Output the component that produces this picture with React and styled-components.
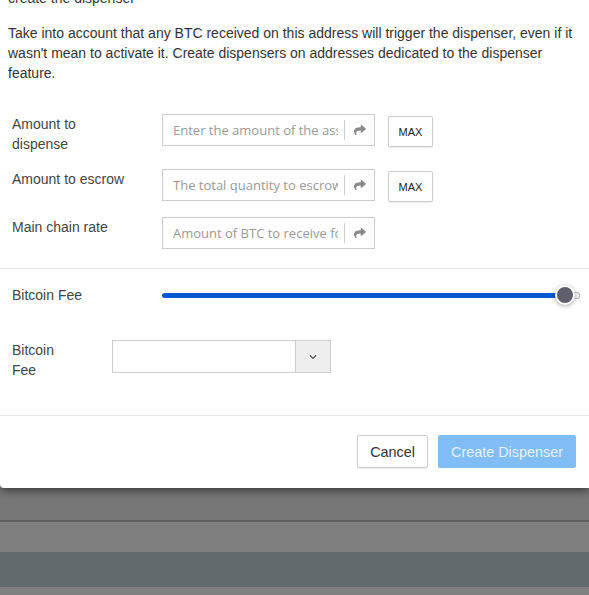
import React from "react";
import styled, { createGlobalStyle } from "styled-components";
import { FaShare, FaChevronDown } from "react-icons/fa";

const GlobalStyle = createGlobalStyle`
  html, body {
    margin: 0;
    padding: 0;
    background: #808080;
    overflow: hidden;
  }
  body {
    font-family: "Liberation Sans", Arial, sans-serif;
    color: #333;
  }
`;

const App = () => {
  return (
    <Page>
      <GlobalStyle />
      <Modal>
        <Body>
          <Intro>create the dispenser</Intro>
          <Note>
            Take into account that any BTC received on this address will trigger the dispenser, even if it
            wasn't mean to activate it. Create dispensers on addresses dedicated to the dispenser
            feature.
          </Note>

          <Fields>
            <Row>
              <Label>Amount to dispense</Label>
              <InputGroup>
                <Input placeholder="Enter the amount of the asset to dispense" />
                <Addon>
                  <FaShare />
                </Addon>
              </InputGroup>
              <MaxButton>MAX</MaxButton>
            </Row>
            <Row>
              <Label>Amount to escrow</Label>
              <InputGroup>
                <Input placeholder="The total quantity to escrow" />
                <Addon>
                  <FaShare />
                </Addon>
              </InputGroup>
              <MaxButton>MAX</MaxButton>
            </Row>
            <Row>
              <Label>Main chain rate</Label>
              <InputGroup>
                <Input placeholder="Amount of BTC to receive for each dispense" />
                <Addon>
                  <FaShare />
                </Addon>
              </InputGroup>
            </Row>
          </Fields>
        </Body>

        <Divider />

        <FeeSection>
          <SliderRow>
            <Label>Bitcoin Fee</Label>
            <Slider>
              <Track style={{ width: "96%" }} />
              <Thumb />
              <Rest />
            </Slider>
          </SliderRow>
          <SelectRow>
            <Label $width="100px">Bitcoin Fee</Label>
            <Select>
              <SelectValue />
              <SelectArrow>
                <FaChevronDown />
              </SelectArrow>
            </Select>
          </SelectRow>
        </FeeSection>

        <Divider />

        <Footer>
          <Button>Cancel</Button>
          <Button $primary>Create Dispenser</Button>
        </Footer>
      </Modal>

      <Backdrop>
        <Stripe $h="32px" $bg="#777777" />
        <Stripe $h="2px" $bg="#5f5f5f" />
        <Stripe $h="30px" $bg="#7f7f7f" />
        <Stripe $h="35px" $bg="#636a6d" />
        <Stripe $h="20px" $bg="#808080" />
      </Backdrop>
    </Page>
  );
};

const Page = styled.div`
  display: flex;
  flex-direction: column;
  width: 589px;
  height: 595px;
  overflow: hidden;
`;

const Modal = styled.div`
  background: #fff;
  box-shadow: 0 3px 9px rgba(0, 0, 0, 0.5);
  position: relative;
  z-index: 1;
  border-bottom-left-radius: 4px;
`;

const Body = styled.div`
  padding: 0 3px 0 8px;
`;

const Intro = styled.p`
  margin: -12px 0 0;
  font-size: 14px;
  line-height: 20px;
`;

const Note = styled.p`
  margin: 15px 0 0;
  font-size: 14px;
  line-height: 20px;
  color: #333;
`;

const Fields = styled.div`
  display: flex;
  flex-direction: column;
  gap: 15px;
  padding: 31px 0 19px 4px;
`;

const Row = styled.div`
  display: flex;
  align-items: flex-start;
`;

const Label = styled.div`
  width: ${props => props.$width || "150px"};
  flex-shrink: 0;
  font-size: 14px;
  line-height: 20px;
  color: #444;
  padding-right: ${props => (props.$width ? "40px" : "32px")};
  box-sizing: border-box;
`;

const InputGroup = styled.div`
  display: flex;
  align-items: center;
  width: 213px;
  height: 32px;
  box-sizing: border-box;
  border: 1px solid #ccc;
  background: #fff;
`;

const Input = styled.input`
  flex: 1;
  min-width: 0;
  border: none;
  outline: none;
  height: 100%;
  padding: 0 6px 0 10px;
  font-family: "Open Sans", sans-serif;
  font-size: 13px;
  color: #555;
  background: transparent;
  &::placeholder {
    color: #999;
  }
`;

const Addon = styled.span`
  display: flex;
  align-items: center;
  justify-content: center;
  width: 29px;
  height: 20px;
  border-left: 1px solid #ccc;
  color: #8a8a8a;
  font-size: 12px;
`;

const MaxButton = styled.button`
  margin: 2px 0 0 13px;
  width: 45px;
  height: 31px;
  border: 1px solid #ccc;
  border-radius: 2px;
  background: #fff;
  box-shadow: 0 1px 1px rgba(0, 0, 0, 0.08);
  font-family: "Liberation Sans", Arial, sans-serif;
  font-size: 11px;
  color: #222;
  padding: 0;
`;

const Divider = styled.hr`
  margin: 0;
  border: none;
  border-top: 1px solid #e5e5e5;
`;

const FeeSection = styled.div`
  padding: 16px 0 35px 12px;
  display: flex;
  flex-direction: column;
  gap: 35px;
`;

const SliderRow = styled.div`
  display: flex;
  align-items: center;
  height: 20px;
`;

const Slider = styled.div`
  display: flex;
  align-items: center;
  width: 418px;
`;

const Track = styled.div`
  height: 5px;
  border-radius: 3px 0 0 3px;
  background: #0057d3;
`;

const Thumb = styled.div`
  flex-shrink: 0;
  width: 16px;
  height: 16px;
  margin: 0 -5px 0 -8px;
  border-radius: 50%;
  background: #5f5f6e;
  border: 2px solid #fff;
  box-shadow: 0 1px 4px rgba(0, 0, 0, 0.35);
  position: relative;
  z-index: 1;
`;

const Rest = styled.div`
  flex: 1;
  height: 5px;
  border: 1px solid #bbb;
  border-left: none;
  border-radius: 0 3px 3px 0;
  background: #f3f3f3;
`;

const SelectRow = styled.div`
  display: flex;
  align-items: flex-start;
`;

const Select = styled.div`
  display: flex;
  width: 219px;
  height: 33px;
  box-sizing: border-box;
  border: 1px solid #ccc;
`;

const SelectValue = styled.div`
  flex: 1;
`;

const SelectArrow = styled.div`
  width: 34px;
  display: flex;
  align-items: center;
  justify-content: center;
  border-left: 1px solid #ccc;
  background: #eee;
  color: #555;
  font-size: 8px;
`;

const Footer = styled.div`
  display: flex;
  justify-content: flex-end;
  gap: 10px;
  padding: 19px 13px 20px 0;
`;

const Button = styled.button`
  height: 33px;
  padding: 0 12px;
  border-radius: 2px;
  font-family: "Liberation Sans", Arial, sans-serif;
  font-size: 14.4px;
  border: 1px solid ${props => (props.$primary ? "#80bdf5" : "#ccc")};
  background: ${props => (props.$primary ? "#80bdf5" : "#fff")};
  color: ${props => (props.$primary ? "#e6f1fd" : "#333")};
  box-shadow: ${props => (props.$primary ? "none" : "0 1px 1px rgba(0,0,0,0.08)")};
`;

const Backdrop = styled.div`
  display: flex;
  flex-direction: column;
`;

const Stripe = styled.div`
  height: ${props => props.$h};
  background: ${props => props.$bg};
  flex-shrink: 0;
`;

export default App;
